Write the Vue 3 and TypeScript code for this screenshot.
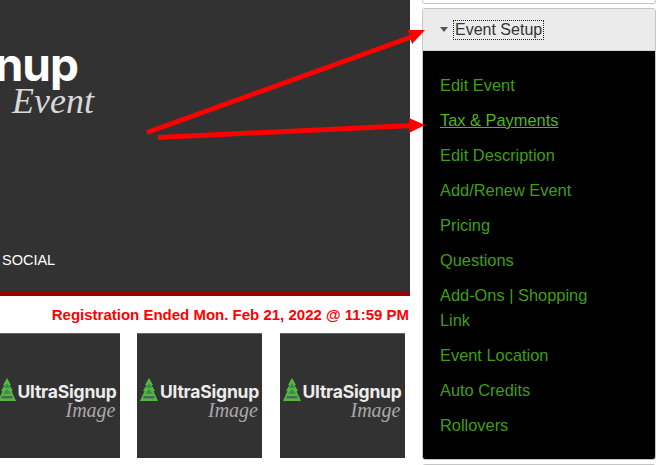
<script setup lang="ts">
type MenuItem = {
  label: string;
  active?: boolean;
};

const menuItems: MenuItem[] = [
  { label: "Edit Event" },
  { label: "Tax & Payments", active: true },
  { label: "Edit Description" },
  { label: "Add/Renew Event" },
  { label: "Pricing" },
  { label: "Questions" },
  { label: "Add-Ons | Shopping Link" },
  { label: "Event Location" },
  { label: "Auto Credits" },
  { label: "Rollovers" },
];

const thumbs = [1, 2, 3];
</script>

<template>
  <div class="page">
    <div class="left">
      <div class="hero">
        <div class="logo">
          <div class="logo-name">nup</div>
          <div class="logo-sub">Event</div>
        </div>
        <div class="social">SOCIAL</div>
      </div>
      <div class="ended">Registration Ended Mon. Feb 21, 2022 @ 11:59 PM</div>
      <div class="thumbs">
        <div v-for="t in thumbs" :key="t" class="thumb">
          <svg class="tree" width="18" height="24" viewBox="0 0 18 24">
            <polygon points="9,0 13,7 11.5,7 15,13 13.5,13 18,23 0,23 4.5,13 3,13 6.5,7 5,7" fill="#56b83f" />
            <polygon points="9,5 12,10 6,10" fill="#2f8f4a" />
            <polygon points="9,11 13,16 5,16" fill="#3c8a55" />
            <rect x="3.5" y="18" width="11" height="2.5" fill="#47695f" />
          </svg>
          <div class="thumb-text">
            <div class="thumb-name">UltraSignup</div>
            <div class="thumb-sub">Image</div>
          </div>
        </div>
      </div>
    </div>

    <div class="right">
      <div class="panel-stub top"></div>
      <div class="panel">
        <div class="panel-head">
          <span class="caret"></span>
          <span class="panel-title">Event Setup</span>
        </div>
        <ul class="menu">
          <li v-for="item in menuItems" :key="item.label">
            <a :class="{ active: item.active }">{{ item.label }}</a>
          </li>
        </ul>
      </div>
      <div class="panel-stub bottom"></div>
    </div>

    <svg class="arrows" width="660" height="465" viewBox="0 0 660 465">
      <line x1="147" y1="132.5" x2="414" y2="36" stroke="#ff0000" stroke-width="5" />
      <polygon points="408,30 425,30 412,44" fill="#ff0000" />
      <line x1="158" y1="137.5" x2="412" y2="125.5" stroke="#ff0000" stroke-width="5" />
      <polygon points="409,118 425,125 409,133" fill="#ff0000" />
    </svg>
  </div>
</template>

<style scoped>
.page {
  position: relative;
  display: flex;
  width: 660px;
  height: 465px;
  overflow: hidden;
  background: #fff;
  font-family: "Liberation Sans", Arial, sans-serif;
}

.left {
  width: 410px;
  flex-shrink: 0;
}

.hero {
  display: flex;
  flex-direction: column;
  height: 292px;
  background: #333233;
  border-bottom: 4px solid #990000;
  box-sizing: content-box;
}

.logo {
  height: 244px;
  padding-top: 39px;
  box-sizing: border-box;
}

.logo-name {
  display: flex;
  justify-content: flex-end;
  width: 78px;
  font-family: Inter, sans-serif;
  font-size: 46px;
  font-weight: 700;
  letter-spacing: -1px;
  line-height: 50px;
  color: #fff;
}

.logo-sub {
  margin-left: 12px;
  font-family: "Liberation Serif", serif;
  font-size: 36px;
  font-style: italic;
  line-height: 24px;
  color: #d8d8d8;
}

.social {
  padding-left: 2px;
  margin-top: 8px;
  font-size: 14.5px;
  line-height: 16px;
  color: #fff;
}

.ended {
  margin-top: 10px;
  text-align: right;
  padding-right: 1px;
  font-size: 15px;
  font-weight: bold;
  line-height: 17px;
  color: #ff0000;
}

.thumbs {
  display: flex;
  gap: 17.5px;
  margin-top: 10px;
  margin-left: -5.5px;
}

.thumb {
  display: flex;
  align-items: flex-start;
  gap: 2px;
  width: 125px;
  height: 125px;
  flex-shrink: 0;
  padding: 44px 0 0 3px;
  box-sizing: border-box;
  background: #333233;
  border-top: 1px solid #666;
}

.tree {
  flex-shrink: 0;
}

.thumb-text {
  margin-top: 4px;
  white-space: nowrap;
}

.thumb-name {
  font-family: Inter, sans-serif;
  font-size: 17.5px;
  font-weight: 700;
  letter-spacing: -0.2px;
  line-height: 20px;
  color: #ececec;
}

.thumb-sub {
  margin-left: 48px;
  font-family: "Liberation Serif", serif;
  font-size: 20px;
  font-style: italic;
  line-height: 16px;
  color: #a8a8a8;
}

.right {
  flex: 1;
  padding: 0 4px 0 12px;
}

.panel-stub {
  border: 1px solid #c5c5c5;
  border-radius: 3px;
  height: 14px;
}

.panel-stub.top {
  margin-top: -12px;
}

.panel-stub.bottom {
  margin-top: 4px;
}

.panel {
  margin-top: 4px;
  border: 1px solid #c5c5c5;
  border-radius: 3px;
  overflow: hidden;
}

.panel-head {
  display: flex;
  align-items: center;
  height: 42px;
  padding-left: 17px;
  background: #ebebeb;
  border-bottom: 1px solid #d3d3d3;
  box-sizing: border-box;
}

.caret {
  width: 0;
  height: 0;
  margin-right: 6px;
  border-left: 4.5px solid transparent;
  border-right: 4.5px solid transparent;
  border-top: 5px solid #555;
}

.panel-title {
  padding: 0 1px;
  font-size: 16px;
  line-height: 18px;
  color: #333;
  outline: 1px dotted #222;
}

.menu {
  list-style: none;
  margin: 0;
  padding: 17px 0 16px;
  background: #000;
}

.menu li {
  padding: 5px 17px;
  max-width: 160px;
  font-size: 16.4px;
  line-height: 25px;
}

.menu a {
  color: #3f9f14;
}

.menu a.active {
  color: #4cb81c;
  text-decoration: underline;
}

.arrows {
  position: absolute;
  top: 0;
  left: 0;
  pointer-events: none;
}
</style>
